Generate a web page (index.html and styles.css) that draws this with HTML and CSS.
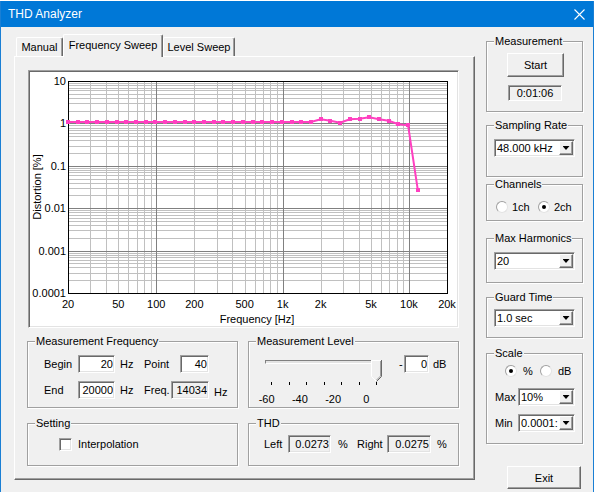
FILE: index.html
```html
<!DOCTYPE html>
<html lang="en">
<head>
    <meta charset="UTF-8">
    <meta name="viewport" content="width=device-width, initial-scale=1.0">
    <title>THD Analyzer</title>
    <link rel="stylesheet" href="styles.css">
</head>
<body>
    <div class="window">
        <div class="titlebar">
            <span class="title">THD Analyzer</span>
            <svg class="close-icon" width="11" height="11" viewBox="0 0 11 11">
                <path d="M0.5 0.5L10.5 10.5M10.5 0.5L0.5 10.5" stroke="#fff" stroke-width="1.1"/>
            </svg>
        </div>

        <div class="client">
            <div class="tab-control">
                <div class="tab-strip">
                    <div class="tab tab-manual">Manual</div>
                    <div class="tab tab-freq active">Frequency Sweep</div>
                    <div class="tab tab-level">Level Sweep</div>
                </div>

                <div class="tab-panel">
                    <div class="chart">
                        <svg id="chart" width="427" height="254"></svg>
                    </div>

                    <div class="group-row row-top">
                        <fieldset class="group freq-group">
                            <legend>Measurement Frequency</legend>
                            <div class="row">
                                <span class="fg-label">Begin</span>
                                <input class="field fg-input" type="text" value="20">
                                <span class="fg-unit">Hz</span>
                                <span class="fg-label-point">Point</span>
                                <input class="field fg-input-point" type="text" value="40">
                            </div>
                            <div class="row">
                                <span class="fg-label">End</span>
                                <input class="field fg-input" type="text" value="20000">
                                <span class="fg-unit">Hz</span>
                                <span class="fg-label-freq">Freq.</span>
                                <input class="field readonly fg-input-freq" type="text" value="14034" readonly>
                                <span class="fg-unit-low">Hz</span>
                            </div>
                        </fieldset>

                        <fieldset class="group level-group">
                            <legend>Measurement Level</legend>
                            <div class="level-body">
                                <div class="slider">
                                    <div class="slider-rail">
                                        <div class="slider-track"></div>
                                        <svg class="slider-thumb" width="11" height="22" viewBox="0 0 11 22">
                                            <polygon points="0,0 11,0 11,16.5 5.5,22 0,16.5" fill="#f0f0f0"/>
                                            <path d="M0.5 16.5V0.5H10" fill="none" stroke="#fff"/>
                                            <path d="M0.5 16.5L5.5 21.5" fill="none" stroke="#fff"/>
                                            <path d="M10.5 0V16.5L5.5 21.5" fill="none" stroke="#696969"/>
                                            <path d="M9.5 1V16L5.5 20" fill="none" stroke="#a0a0a0"/>
                                        </svg>
                                    </div>
                                    <div class="slider-ticks">
                                        <i></i><i></i><i></i><i></i><i></i><i></i><i></i>
                                    </div>
                                    <div class="slider-labels">
                                        <span>-60</span><span>-40</span><span>-20</span><span>0</span>
                                    </div>
                                </div>
                                <div class="level-value">
                                    <span class="minus">-</span>
                                    <input class="field level-input" type="text" value="0">
                                    <span class="level-unit">dB</span>
                                </div>
                            </div>
                        </fieldset>
                    </div>

                    <div class="group-row row-bottom">
                        <fieldset class="group setting-group">
                            <legend>Setting</legend>
                            <div class="row">
                                <span class="checkbox"></span>
                                <span>Interpolation</span>
                            </div>
                        </fieldset>

                        <fieldset class="group thd-group">
                            <legend>THD</legend>
                            <div class="row">
                                <span class="thd-label">Left</span>
                                <input class="field readonly thd-box" type="text" value="0.0273" readonly>
                                <span class="thd-pct">%</span>
                                <span class="thd-label-right">Right</span>
                                <input class="field readonly thd-box-right" type="text" value="0.0275" readonly>
                                <span class="thd-pct-right">%</span>
                            </div>
                        </fieldset>
                    </div>
                </div>
            </div>

            <div class="side">
                <fieldset class="group side-group measure-group">
                    <legend>Measurement</legend>
                    <button class="btn start-btn">Start</button>
                    <div class="timer">0:01:06</div>
                </fieldset>

                <fieldset class="group side-group rate-group">
                    <legend>Sampling Rate</legend>
                    <div class="combo combo-wide">
                        <span class="combo-text">48.000 kHz</span>
                        <span class="combo-btn"></span>
                    </div>
                </fieldset>

                <fieldset class="group side-group channel-group">
                    <legend>Channels</legend>
                    <div class="radio-row channel-radios">
                        <span class="radio"></span>
                        <span class="radio-label first">1ch</span>
                        <span class="radio checked"></span>
                        <span class="radio-label">2ch</span>
                    </div>
                </fieldset>

                <fieldset class="group side-group harm-group">
                    <legend>Max Harmonics</legend>
                    <div class="combo combo-wide">
                        <span class="combo-text">20</span>
                        <span class="combo-btn"></span>
                    </div>
                </fieldset>

                <fieldset class="group side-group guard-group">
                    <legend>Guard Time</legend>
                    <div class="combo combo-wide">
                        <span class="combo-text">1.0 sec</span>
                        <span class="combo-btn"></span>
                    </div>
                </fieldset>

                <fieldset class="group side-group scale-group">
                    <legend>Scale</legend>
                    <div class="radio-row scale-radios">
                        <span class="radio checked"></span>
                        <span class="radio-label pct">%</span>
                        <span class="radio"></span>
                        <span class="radio-label db">dB</span>
                    </div>
                    <div class="scale-row scale-max">
                        <span class="scale-label">Max</span>
                        <div class="combo combo-narrow">
                            <span class="combo-text">10%</span>
                            <span class="combo-btn"></span>
                        </div>
                    </div>
                    <div class="scale-row scale-min">
                        <span class="scale-label">Min</span>
                        <div class="combo combo-narrow">
                            <span class="combo-text">0.0001:</span>
                            <span class="combo-btn"></span>
                        </div>
                    </div>
                </fieldset>

                <button class="btn exit-btn">Exit</button>
            </div>
        </div>
    </div>

    <script>
        document.addEventListener('DOMContentLoaded', function() {
            const svg = document.getElementById('chart');
            const NS = 'http://www.w3.org/2000/svg';

            // Plot area inside the chart box
            const left = 38, top = 9, width = 379, height = 212;

            function xOf(freq) {
                return left + width * Math.log10(freq / 20) / 3;
            }

            function yOf(pct) {
                return top + height * (1 - Math.log10(pct)) / 5;
            }

            function crisp(v) {
                return Math.round(v) + 0.5;
            }

            function add(tag, attrs, text) {
                const node = document.createElementNS(NS, tag);
                for (const key in attrs) node.setAttribute(key, attrs[key]);
                if (text !== undefined) node.textContent = text;
                svg.appendChild(node);
                return node;
            }

            // Grid lines
            const minor = [];
            const major = [];

            for (let d = 10; d <= 10000; d *= 10) {
                for (let m = 1; m <= 9; m++) {
                    const f = m * d;
                    if (f <= 20 || f >= 20000) continue;
                    (m === 1 ? major : minor).push(['v', crisp(xOf(f))]);
                }
            }

            for (let e = -4; e <= 0; e++) {
                for (let m = 1; m <= 9; m++) {
                    if (e === -4 && m === 1) continue;
                    const v = m * Math.pow(10, e);
                    (m === 1 ? major : minor).push(['h', crisp(yOf(v))]);
                }
            }

            function drawLines(list, color) {
                list.forEach(function(line) {
                    const p = line[1];
                    if (line[0] === 'v') {
                        add('line', { x1: p, y1: top, x2: p, y2: top + height, stroke: color });
                    } else {
                        add('line', { x1: left, y1: p, x2: left + width, y2: p, stroke: color });
                    }
                });
            }

            drawLines(minor, '#c0c0c0');
            drawLines(major, '#808080');
            add('rect', { x: left + 0.5, y: top + 0.5, width: width, height: height, fill: 'none', stroke: '#000' });

            // Measured THD values [%], 40 point sweep (only 37 done)
            const thd = new Array(26).fill(1.08).concat([
                1.25, 1.16, 1.04, 1.25, 1.29, 1.39, 1.25, 1.16, 0.95, 0.90, 0.027
            ]);

            const points = thd.map(function(v, i) {
                const f = 20 * Math.pow(1000, i / 39);
                return [xOf(f), yOf(v)];
            });

            add('polyline', {
                points: points.map(function(p) { return p[0].toFixed(1) + ',' + p[1].toFixed(1); }).join(' '),
                fill: 'none',
                stroke: '#ff40c0',
                'stroke-width': 2
            });

            points.forEach(function(p) {
                add('rect', { x: Math.round(p[0]) - 2, y: Math.round(p[1]) - 2, width: 4, height: 4, fill: '#ff40c0' });
            });

            // Axis labels
            [[10, '10'], [1, '1'], [0.1, '0.1'], [0.01, '0.01'], [0.001, '0.001'], [0.0001, '0.0001']].forEach(function(l) {
                add('text', { x: 36, y: yOf(l[0]) + 4, 'text-anchor': 'end' }, l[1]);
            });

            [[20, '20'], [50, '50'], [100, '100'], [200, '200'], [500, '500'],
             [1000, '1k'], [2000, '2k'], [5000, '5k'], [10000, '10k'], [20000, '20k']].forEach(function(l) {
                add('text', { x: xOf(l[0]), y: 236, 'text-anchor': 'middle' }, l[1]);
            });

            add('text', { x: 227, y: 251, 'text-anchor': 'middle' }, 'Frequency [Hz]');
            add('text', { transform: 'translate(11 115) rotate(-90)', 'text-anchor': 'middle' }, 'Distortion [%]');
        });
    </script>
</body>
</html>
```

FILE: styles.css
```css
* {
    box-sizing: border-box;
}

html {
    background: #fff;
}

body {
    margin: 0;
    padding-top: 1px;
    font-family: "Liberation Sans", Arial, sans-serif;
    font-size: 11px;
    color: #000;
}

.window {
    width: 594px;
    height: 491px;
    background: #f0f0f0;
    border-left: 1px solid #1a7fd4;
    border-right: 1px solid #1a7fd4;
}

/* Title bar */
.titlebar {
    height: 26px;
    display: flex;
    align-items: center;
    justify-content: space-between;
    padding: 0 8px 0 7px;
    background: #0078d7;
    color: #fff;
    font-size: 12px;
}

.close-icon {
    display: block;
}

/* Client area */
.client {
    display: flex;
    padding: 7px 0 0 13px;
}

.tab-control {
    width: 461px;
}

/* Tabs */
.tab-strip {
    display: flex;
    align-items: flex-end;
    height: 22px;
    padding-left: 2px;
    position: relative;
    z-index: 1;
}

.tab {
    height: 19px;
    line-height: 18px;
    text-align: center;
    background: #f0f0f0;
    border: 1px solid;
    border-bottom: 0;
    border-color: #fff #696969 #696969 #fff;
    border-radius: 2px 2px 0 0;
    box-shadow: inset -1px 0 0 #a0a0a0;
}

.tab-manual {
    width: 47px;
}

.tab-freq {
    width: 100px;
}

.tab-level {
    width: 72px;
}

.tab.active {
    height: 23px;
    line-height: 20px;
    margin-bottom: -1px;
}

.tab-panel {
    height: 424px;
    padding: 13px 0 0 12px;
    border: 1px solid;
    border-color: #fff #696969 #696969 #fff;
    box-shadow: inset -1px -1px 0 #a0a0a0;
}

/* Chart */
.chart {
    width: 431px;
    height: 258px;
    margin-left: 1px;
    padding: 1px;
    background: #fff;
    border: 1px solid;
    border-color: #a0a0a0 #fff #fff #a0a0a0;
    box-shadow: inset 1px 1px 0 #696969, inset -1px -1px 0 #e3e3e3;
}

.chart svg {
    display: block;
    font-family: "Liberation Sans", Arial, sans-serif;
    font-size: 11px;
}

/* Group boxes */
.group-row {
    display: flex;
    gap: 10px;
}

.row-top {
    margin-top: 7px;
}

.row-bottom {
    margin-top: 9px;
}

.group {
    margin: 0;
    padding: 0;
    min-width: 0;
    border: 1px solid #a0a0a0;
    box-shadow: inset 1px 1px 0 #fff, 1px 1px 0 #fff;
}

.group legend {
    margin-left: 7px;
    padding: 0 1px;
    line-height: 13px;
    background: #f0f0f0;
}

.row {
    display: flex;
    align-items: center;
    height: 18px;
}

.row + .row {
    margin-top: 8px;
}

.row > * {
    flex-shrink: 0;
}

/* Inputs */
.field {
    height: 18px;
    margin: 0;
    padding: 0 1px 0 1px;
    font: inherit;
    color: #000;
    text-align: right;
    background: #fff;
    border: 1px solid;
    border-color: #a0a0a0 #fff #fff #a0a0a0;
    box-shadow: inset 1px 1px 0 #696969, inset -1px -1px 0 #e3e3e3;
    outline: none;
}

.field.readonly {
    background: #f0f0f0;
}

/* Measurement Frequency */
.freq-group {
    width: 211px;
    height: 73px;
    padding-top: 7px;
}

.freq-group .row {
    margin-left: 16px;
}

.fg-label {
    width: 34px;
}

.fg-input {
    width: 37px;
}

.fg-unit {
    width: 24px;
    margin-left: 5px;
}

.fg-label-point {
    width: 36px;
}

.fg-input-point {
    width: 29px;
}

.fg-label-freq {
    width: 27px;
}

.fg-input-freq {
    width: 38px;
}

.fg-unit-low {
    margin-left: 5px;
    align-self: flex-end;
    line-height: 13px;
}

/* Measurement Level */
.level-group {
    width: 211px;
    height: 73px;
}

.level-body {
    display: flex;
    padding-left: 14px;
}

.slider {
    width: 120px;
    padding-top: 4px;
}

.slider-rail {
    position: relative;
    height: 22px;
}

.slider-track {
    width: 116px;
    height: 4px;
    margin: 8px 0 0 2px;
    background: #e3e3e3;
    border: 1px solid;
    border-color: #808080 #fff #fff #808080;
}

.slider-thumb {
    position: absolute;
    left: 108px;
    top: 0;
}

.slider-ticks {
    display: flex;
    justify-content: space-between;
    width: 106px;
    height: 3px;
    margin-left: 8px;
}

.slider-ticks i {
    width: 1px;
    background: #000;
}

.slider-labels {
    display: flex;
    margin: 8px 0 0 -13px;
    line-height: 13px;
}

.slider-labels span {
    width: 35px;
    text-align: center;
}

.level-value {
    display: flex;
    align-items: center;
    height: 18px;
    margin: 7px 0 0 16px;
}

.minus {
    width: 5px;
}

.level-input {
    width: 25px;
}

.level-unit {
    margin-left: 4px;
}

/* Setting */
.setting-group {
    width: 211px;
    height: 49px;
    padding-top: 5px;
}

.setting-group .row {
    margin-left: 31px;
}

.checkbox {
    width: 13px;
    height: 13px;
    margin-right: 6px;
    background: #fff;
    border: 1px solid;
    border-color: #a0a0a0 #fff #fff #a0a0a0;
    box-shadow: inset 1px 1px 0 #696969, inset -1px -1px 0 #e3e3e3;
}

/* THD */
.thd-group {
    width: 211px;
    height: 49px;
    padding-top: 5px;
}

.thd-group .row {
    margin-left: 15px;
}

.thd-label {
    width: 24px;
}

.thd-box {
    width: 43px;
}

.thd-pct {
    width: 19px;
    margin-left: 7px;
}

.thd-label-right {
    width: 30px;
}

.thd-box-right {
    width: 44px;
}

.thd-pct-right {
    margin-left: 6px;
}

/* Right column */
.side {
    width: 97px;
    margin: 1px 0 0 11px;
}

.side-group {
    width: 97px;
}

.btn {
    display: block;
    margin: 0;
    padding: 0;
    font: inherit;
    color: #000;
    background: #f0f0f0;
    border: 1px solid;
    border-color: #fff #696969 #696969 #fff;
    box-shadow: inset -1px -1px 0 #a0a0a0;
}

.measure-group {
    height: 77px;
    padding-top: 5px;
}

.start-btn {
    width: 57px;
    height: 24px;
    margin-left: 20px;
}

.timer {
    width: 54px;
    height: 16px;
    margin: 8px 0 0 21px;
    line-height: 14px;
    text-align: center;
    border: 1px solid;
    border-color: #a0a0a0 #fff #fff #a0a0a0;
    box-shadow: inset 1px 1px 0 #696969;
}

.rate-group {
    height: 58px;
    margin-top: 7px;
    padding-top: 7px;
}

.channel-group {
    height: 43px;
    margin-top: 1px;
    padding-top: 9px;
}

.harm-group {
    height: 51px;
    margin-top: 11px;
    padding-top: 7px;
}

.guard-group {
    height: 47px;
    margin-top: 8px;
    padding-top: 5px;
}

.scale-group {
    height: 97px;
    margin-top: 9px;
    padding-top: 4px;
}

/* Combo boxes */
.combo {
    display: flex;
    height: 18px;
    padding: 1px;
    background: #fff;
    border: 1px solid;
    border-color: #a0a0a0 #fff #fff #a0a0a0;
    box-shadow: inset 1px 1px 0 #696969, inset -1px -1px 0 #e3e3e3;
}

.combo-wide {
    width: 81px;
    margin-left: 7px;
}

.combo-narrow {
    width: 57px;
}

.combo-text {
    flex: 1;
    min-width: 0;
    overflow: hidden;
    white-space: nowrap;
    padding-left: 1px;
    line-height: 14px;
}

.combo-btn {
    width: 14px;
    height: 14px;
    display: flex;
    align-items: center;
    justify-content: center;
    background: #f0f0f0;
    border: 1px solid;
    border-color: #fff #696969 #696969 #fff;
    box-shadow: inset -1px -1px 0 #a0a0a0;
}

.combo-btn::after {
    content: '';
    width: 7px;
    height: 4px;
    background: #000;
    clip-path: polygon(0 0, 100% 0, 50% 100%);
}

/* Radio buttons */
.radio-row {
    display: flex;
    align-items: center;
    height: 14px;
}

.radio {
    width: 12px;
    height: 12px;
    display: flex;
    align-items: center;
    justify-content: center;
    background: #fff;
    border: 1px solid;
    border-color: #a0a0a0 #e3e3e3 #e3e3e3 #a0a0a0;
    border-radius: 50%;
}

.radio.checked::after {
    content: '';
    width: 4px;
    height: 4px;
    border-radius: 50%;
    background: #000;
}

.radio-label {
    margin-left: 4px;
}

.radio-label.first {
    width: 26px;
}

.channel-radios {
    padding-left: 9px;
}

.scale-radios {
    padding-left: 18px;
}

.radio-label.pct {
    width: 17px;
    margin-left: 6px;
}

.radio-label.db {
    margin-left: 6px;
}

.scale-row {
    display: flex;
    align-items: center;
    padding-left: 8px;
}

.scale-max {
    margin-top: 10px;
}

.scale-min {
    margin-top: 8px;
}

.scale-label {
    width: 23px;
}

.exit-btn {
    width: 74px;
    height: 23px;
    margin: 22px 0 0 21px;
}
```
